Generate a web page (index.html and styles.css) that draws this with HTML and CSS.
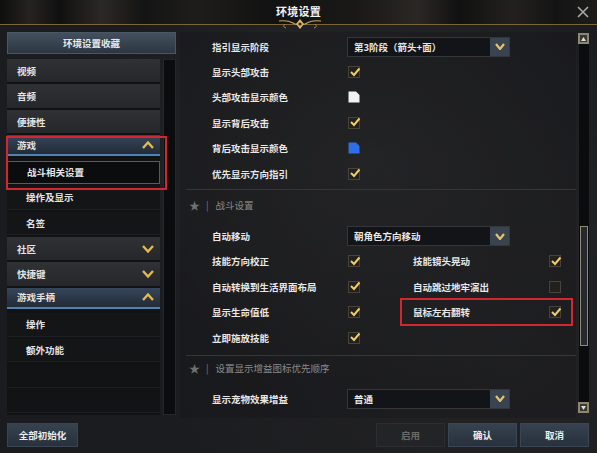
FILE: index.html
```html
<!DOCTYPE html>
<html>
<head>
  <title>环境设置</title>
  <meta charset="UTF-8">
  <meta name="viewport" content="width=device-width, initial-scale=1.0">
  <link rel="stylesheet" href="styles.css">
</head>
<body>
<div class="window">
  <header class="titlebar">
    <span class="title">环境设置</span>
    <svg class="ornament" width="44" height="12" viewBox="0 0 44 12">
      <path d="M1 3 Q10 2 15 5 Q18 7 20 6 M43 3 Q34 2 29 5 Q26 7 24 6" stroke="#c9a85e" stroke-width="1.2" fill="none"/>
      <path d="M7 6 Q4 9 8 10 M37 6 Q40 9 36 10" stroke="#a88a48" stroke-width="1" fill="none"/>
      <path d="M22 1 L26 6 L22 11 L18 6 Z" fill="#d8b86a"/>
      <circle cx="22" cy="6" r="1.6" fill="#2a2418"/>
    </svg>
    <svg class="close" width="12" height="12" viewBox="0 0 12 12">
      <path d="M1 1 L11 11 M11 1 L1 11" stroke="#a9a9a9" stroke-width="1.6"/>
    </svg>
  </header>

  <div class="body">
    <aside class="sidebar">
      <div class="fav">环境设置收藏</div>
      <div class="listwrap">
        <ul class="menu">
          <li class="item">视频</li>
          <li class="item">音频</li>
          <li class="item">便捷性</li>
          <li class="item open">游戏
            <svg class="arrow" width="12" height="8" viewBox="0 0 12 8"><path d="M1 7 L6 1.5 L11 7" stroke="#e6b94c" stroke-width="2.4" fill="none"/></svg>
          </li>
          <li class="sub current">战斗相关设置</li>
          <li class="sub">操作及显示</li>
          <li class="sub">名签</li>
          <li class="item">社区
            <svg class="arrow" width="12" height="8" viewBox="0 0 12 8"><path d="M1 1 L6 6.5 L11 1" stroke="#e6b94c" stroke-width="2.4" fill="none"/></svg>
          </li>
          <li class="item">快捷键
            <svg class="arrow" width="12" height="8" viewBox="0 0 12 8"><path d="M1 1 L6 6.5 L11 1" stroke="#e6b94c" stroke-width="2.4" fill="none"/></svg>
          </li>
          <li class="item open">游戏手柄
            <svg class="arrow" width="12" height="8" viewBox="0 0 12 8"><path d="M1 7 L6 1.5 L11 7" stroke="#e6b94c" stroke-width="2.4" fill="none"/></svg>
          </li>
          <li class="sub">操作</li>
          <li class="sub">额外功能</li>
          <li class="sub empty"></li>
          <li class="sub empty"></li>
        </ul>
        <div class="vtrack"></div>
        <div class="mark mark-menu"></div>
      </div>
    </aside>

    <section class="main">
      <div class="settings">
        <div class="row">
          <span class="lbl">指引显示阶段</span>
          <div class="select"><span>第3阶段（箭头+面）</span><i class="drop"><svg width="10" height="7" viewBox="0 0 10 7"><path d="M1 1 L5 6 L9 1" stroke="#e2c46e" stroke-width="2.2" fill="none"/></svg></i></div>
        </div>
        <div class="row">
          <span class="lbl">显示头部攻击</span>
          <span class="chk"><svg width="12" height="12" viewBox="0 0 12 12"><path d="M2 6 L5 9 L10.5 2.5" stroke="#f0cd6c" stroke-width="2" fill="none"/></svg></span>
        </div>
        <div class="row">
          <span class="lbl">头部攻击显示颜色</span>
          <svg class="swatch" width="12" height="12" viewBox="0 0 12 12"><path d="M0.5 0.5 H8 L11.5 4 V11.5 H0.5 Z" fill="#f2f2f2"/></svg>
        </div>
        <div class="row">
          <span class="lbl">显示背后攻击</span>
          <span class="chk"><svg width="12" height="12" viewBox="0 0 12 12"><path d="M2 6 L5 9 L10.5 2.5" stroke="#f0cd6c" stroke-width="2" fill="none"/></svg></span>
        </div>
        <div class="row">
          <span class="lbl">背后攻击显示颜色</span>
          <svg class="swatch" width="12" height="12" viewBox="0 0 12 12"><path d="M0.5 0.5 H8 L11.5 4 V11.5 H0.5 Z" fill="#2f6fe6"/></svg>
        </div>
        <div class="row">
          <span class="lbl">优先显示方向指引</span>
          <span class="chk"><svg width="12" height="12" viewBox="0 0 12 12"><path d="M2 6 L5 9 L10.5 2.5" stroke="#f0cd6c" stroke-width="2" fill="none"/></svg></span>
        </div>

        <div class="section"><span class="star">★</span><span class="bar">|</span>战斗设置</div>

        <div class="row">
          <span class="lbl">自动移动</span>
          <div class="select"><span>朝角色方向移动</span><i class="drop"><svg width="10" height="7" viewBox="0 0 10 7"><path d="M1 1 L5 6 L9 1" stroke="#e2c46e" stroke-width="2.2" fill="none"/></svg></i></div>
        </div>
        <div class="row">
          <div class="half">
            <span class="lbl">技能方向校正</span>
            <span class="chk"><svg width="12" height="12" viewBox="0 0 12 12"><path d="M2 6 L5 9 L10.5 2.5" stroke="#f0cd6c" stroke-width="2" fill="none"/></svg></span>
          </div>
          <div class="half">
            <span class="lbl">技能镜头晃动</span>
            <span class="chk"><svg width="12" height="12" viewBox="0 0 12 12"><path d="M2 6 L5 9 L10.5 2.5" stroke="#f0cd6c" stroke-width="2" fill="none"/></svg></span>
          </div>
        </div>
        <div class="row">
          <div class="half">
            <span class="lbl">自动转换到生活界面布局</span>
            <span class="chk"><svg width="12" height="12" viewBox="0 0 12 12"><path d="M2 6 L5 9 L10.5 2.5" stroke="#f0cd6c" stroke-width="2" fill="none"/></svg></span>
          </div>
          <div class="half">
            <span class="lbl">自动跳过地牢演出</span>
            <span class="chk"></span>
          </div>
        </div>
        <div class="row">
          <div class="half">
            <span class="lbl">显示生命值低</span>
            <span class="chk"><svg width="12" height="12" viewBox="0 0 12 12"><path d="M2 6 L5 9 L10.5 2.5" stroke="#f0cd6c" stroke-width="2" fill="none"/></svg></span>
          </div>
          <div class="half marked">
            <span class="lbl">鼠标左右翻转</span>
            <span class="chk"><svg width="12" height="12" viewBox="0 0 12 12"><path d="M2 6 L5 9 L10.5 2.5" stroke="#f0cd6c" stroke-width="2" fill="none"/></svg></span>
          </div>
        </div>
        <div class="row">
          <span class="lbl">立即施放技能</span>
          <span class="chk"><svg width="12" height="12" viewBox="0 0 12 12"><path d="M2 6 L5 9 L10.5 2.5" stroke="#f0cd6c" stroke-width="2" fill="none"/></svg></span>
        </div>

        <div class="section second"><span class="star">★</span><span class="bar">|</span>设置显示增益图标优先顺序</div>

        <div class="row last">
          <span class="lbl">显示宠物效果增益</span>
          <div class="select"><span>普通</span><i class="drop"><svg width="10" height="7" viewBox="0 0 10 7"><path d="M1 1 L5 6 L9 1" stroke="#e2c46e" stroke-width="2.2" fill="none"/></svg></i></div>
        </div>
      </div>

      <div class="scrollbar">
        <span class="sbtn"><svg width="5" height="4" viewBox="0 0 5 4"><path d="M0 4 L2.5 0 L5 4 Z" fill="#ddd"/></svg></span>
        <div class="track">
          <div class="thumb"></div>
        </div>
        <span class="sbtn"><svg width="5" height="4" viewBox="0 0 5 4"><path d="M0 0 L2.5 4 L5 0 Z" fill="#ddd"/></svg></span>
      </div>
    </section>
  </div>

  <footer class="footer">
    <button class="btn reset">全部初始化</button>
    <div class="actions">
      <button class="btn off">启用</button>
      <button class="btn">确认</button>
      <button class="btn">取消</button>
    </div>
  </footer>
</div>
</body>
</html>
```

FILE: styles.css
```css
* {
  box-sizing: border-box;
}
body {
  margin: 0;
  width: 597px;
  height: 453px;
  overflow: hidden;
  background: #1a1b1e;
  font-family: "Noto Sans CJK SC", "Noto Sans", sans-serif;
  color: #e6e6e6;
}
.window {
  height: 453px;
  display: flex;
  flex-direction: column;
  background:
    radial-gradient(ellipse at 62% 35%, rgba(70,70,68,0.35), transparent 55%),
    radial-gradient(ellipse at 85% 80%, rgba(60,58,55,0.25), transparent 50%),
    #1b1c1f;
}

/* title */
.titlebar {
  height: 25px;
  flex-shrink: 0;
  position: relative;
  display: flex;
  align-items: center;
  justify-content: center;
  border-bottom: 1px solid #7a6638;
  background: linear-gradient(90deg, #0e0e0e 0%, #252321 5%, #101010 10%, #2b2926 17%, #141414 24%, #1e1d1b 33%, #121212 45%, #1a1918 60%, #2a2724 70%, #111 77%, #23211f 86%, #141414 93%, #1d1c1b 100%);
}
.title {
  font-size: 11px;
  font-weight: 700;
  color: #f2f2f2;
  letter-spacing: 0.3px;
  margin-top: -2px;
}
.ornament {
  position: absolute;
  left: 278px;
  bottom: -6px;
}
.close {
  position: absolute;
  right: 8px;
  top: 6px;
}

.body {
  flex: 1;
  display: flex;
  padding: 7px 0 0 7px;
}

/* sidebar */
.sidebar {
  width: 169px;
  display: flex;
  flex-direction: column;
}
.fav {
  height: 22px;
  display: flex;
  align-items: center;
  justify-content: center;
  font-size: 9.5px;
  font-weight: 700;
  color: #e8e8e8;
  background: linear-gradient(#44505e, #2c3642);
  border: 1px solid #4b5765;
  margin-bottom: 5px;
}
.listwrap {
  position: relative;
  height: 356px;
  display: flex;
  gap: 3px;
}
.menu {
  list-style: none;
  margin: 0;
  padding: 0;
  width: 153px;
  background: #111214;
  display: flex;
  flex-direction: column;
}
.menu li {
  height: 23.5px;
  margin-bottom: 2px;
  display: flex;
  align-items: center;
  justify-content: space-between;
  font-size: 9.5px;
  font-weight: 700;
  color: #e4e4e4;
}
.item {
  padding: 0 6px 0 10px;
  background: linear-gradient(#303134, #26272a);
}
.item.open {
  background: linear-gradient(#36455a, #222c38);
  border-bottom: 2px solid #4f80b6;
  height: 21px;
  margin-bottom: 4.5px;
}
.sub {
  padding-left: 19px;
  background: #141517;
  border-bottom: 1px solid #1d1e21;
}
.sub.current {
  background: #0b0c0e;
  border: 1px solid #42607e;
}
.sub.empty {
  background: #121315;
}
.vtrack {
  width: 13px;
  background: #0b0c0d;
  border: 1px solid #25272a;
}
.mark {
  position: absolute;
  border: 2px solid #d4262f;
  pointer-events: none;
}
.mark-menu {
  left: -1px;
  top: 77px;
  width: 161px;
  height: 54px;
}

/* main panel */
.main {
  flex: 1;
  display: flex;
  margin-left: 4px;
}
.settings {
  width: 396px;
  flex-shrink: 0;
  padding-top: 2px;
  background: rgba(20,21,24,0.3);
}
.row {
  height: 25.4px;
  display: flex;
  align-items: center;
  padding-left: 32px;
}
.half {
  width: 201px;
  flex-shrink: 0;
  display: flex;
  align-items: center;
  position: relative;
}
.half + .half {
  width: 148px;
}
.half.marked::after {
  content: "";
  position: absolute;
  left: -13px;
  right: -12px;
  top: -7px;
  bottom: -7px;
  border: 2px solid #d4262f;
}
.lbl {
  width: 135px;
  flex-shrink: 0;
  font-size: 9.5px;
  font-weight: 700;
  color: #e8e8e8;
  white-space: nowrap;
}
.chk {
  width: 12px;
  height: 12px;
  margin-left: 1px;
  background: #22211d;
  border: 1px solid #48433a;
  display: flex;
  align-items: center;
  justify-content: center;
}
.chk svg {
  margin: -1px -2px 0 0;
}
.swatch {
  margin-left: 1px;
}
.select {
  width: 163px;
  height: 20px;
  display: flex;
  align-items: center;
  justify-content: space-between;
  background: #121417;
  border: 1px solid #33363b;
  font-size: 9.5px;
  font-weight: 700;
  color: #e8e8e8;
}
.select span {
  padding-left: 6px;
}
.drop {
  width: 19px;
  height: 18px;
  display: flex;
  align-items: center;
  justify-content: center;
  background: #3a4350;
}
.section {
  height: 34px;
  margin-top: 3px;
  margin-left: 6px;
  border-top: 1px solid #39352f;
  display: flex;
  align-items: center;
  padding: 0 0 4px 3px;
  font-size: 9.5px;
  color: #8a8a8a;
}
.section.second {
  height: 31px;
  margin-top: 5px;
  padding-bottom: 7px;
}
.star {
  font-size: 11px;
  color: #6f7072;
  width: 14px;
}
.bar {
  color: #7a7a7a;
  margin: 0 7px 0 3px;
}

/* right scrollbar */
.scrollbar {
  width: 11px;
  margin: 1px 0 0 2px;
  height: 380px;
  display: flex;
  flex-direction: column;
}
.sbtn {
  height: 11px;
  display: flex;
  align-items: center;
  justify-content: center;
  background: #3a3833;
  border: 2px solid #8d8672;
}
.track {
  flex: 1;
  background: #0b0c0d;
  padding: 182px 1px 0;
  margin: 0 0 0 1px;
}
.thumb {
  height: 120px;
  background: #26282b;
  border: 1px solid #8e8a7c;
}

/* bottom buttons */
.footer {
  height: 35px;
  flex-shrink: 0;
  display: flex;
  justify-content: space-between;
  padding: 5px 8px 6px 7px;
}
.actions {
  display: flex;
  gap: 3px;
}
.btn {
  width: 69px;
  height: 24px;
  font-family: inherit;
  font-size: 9.5px;
  font-weight: 700;
  color: #ececec;
  background: linear-gradient(#36424f, #28313c);
  border: 1px solid #3b4654;
  padding: 0;
}
.btn.reset {
  width: 71px;
}
.btn.off {
  color: #6a6a6a;
  background: #232426;
  border-color: #2c2d30;
}
```
